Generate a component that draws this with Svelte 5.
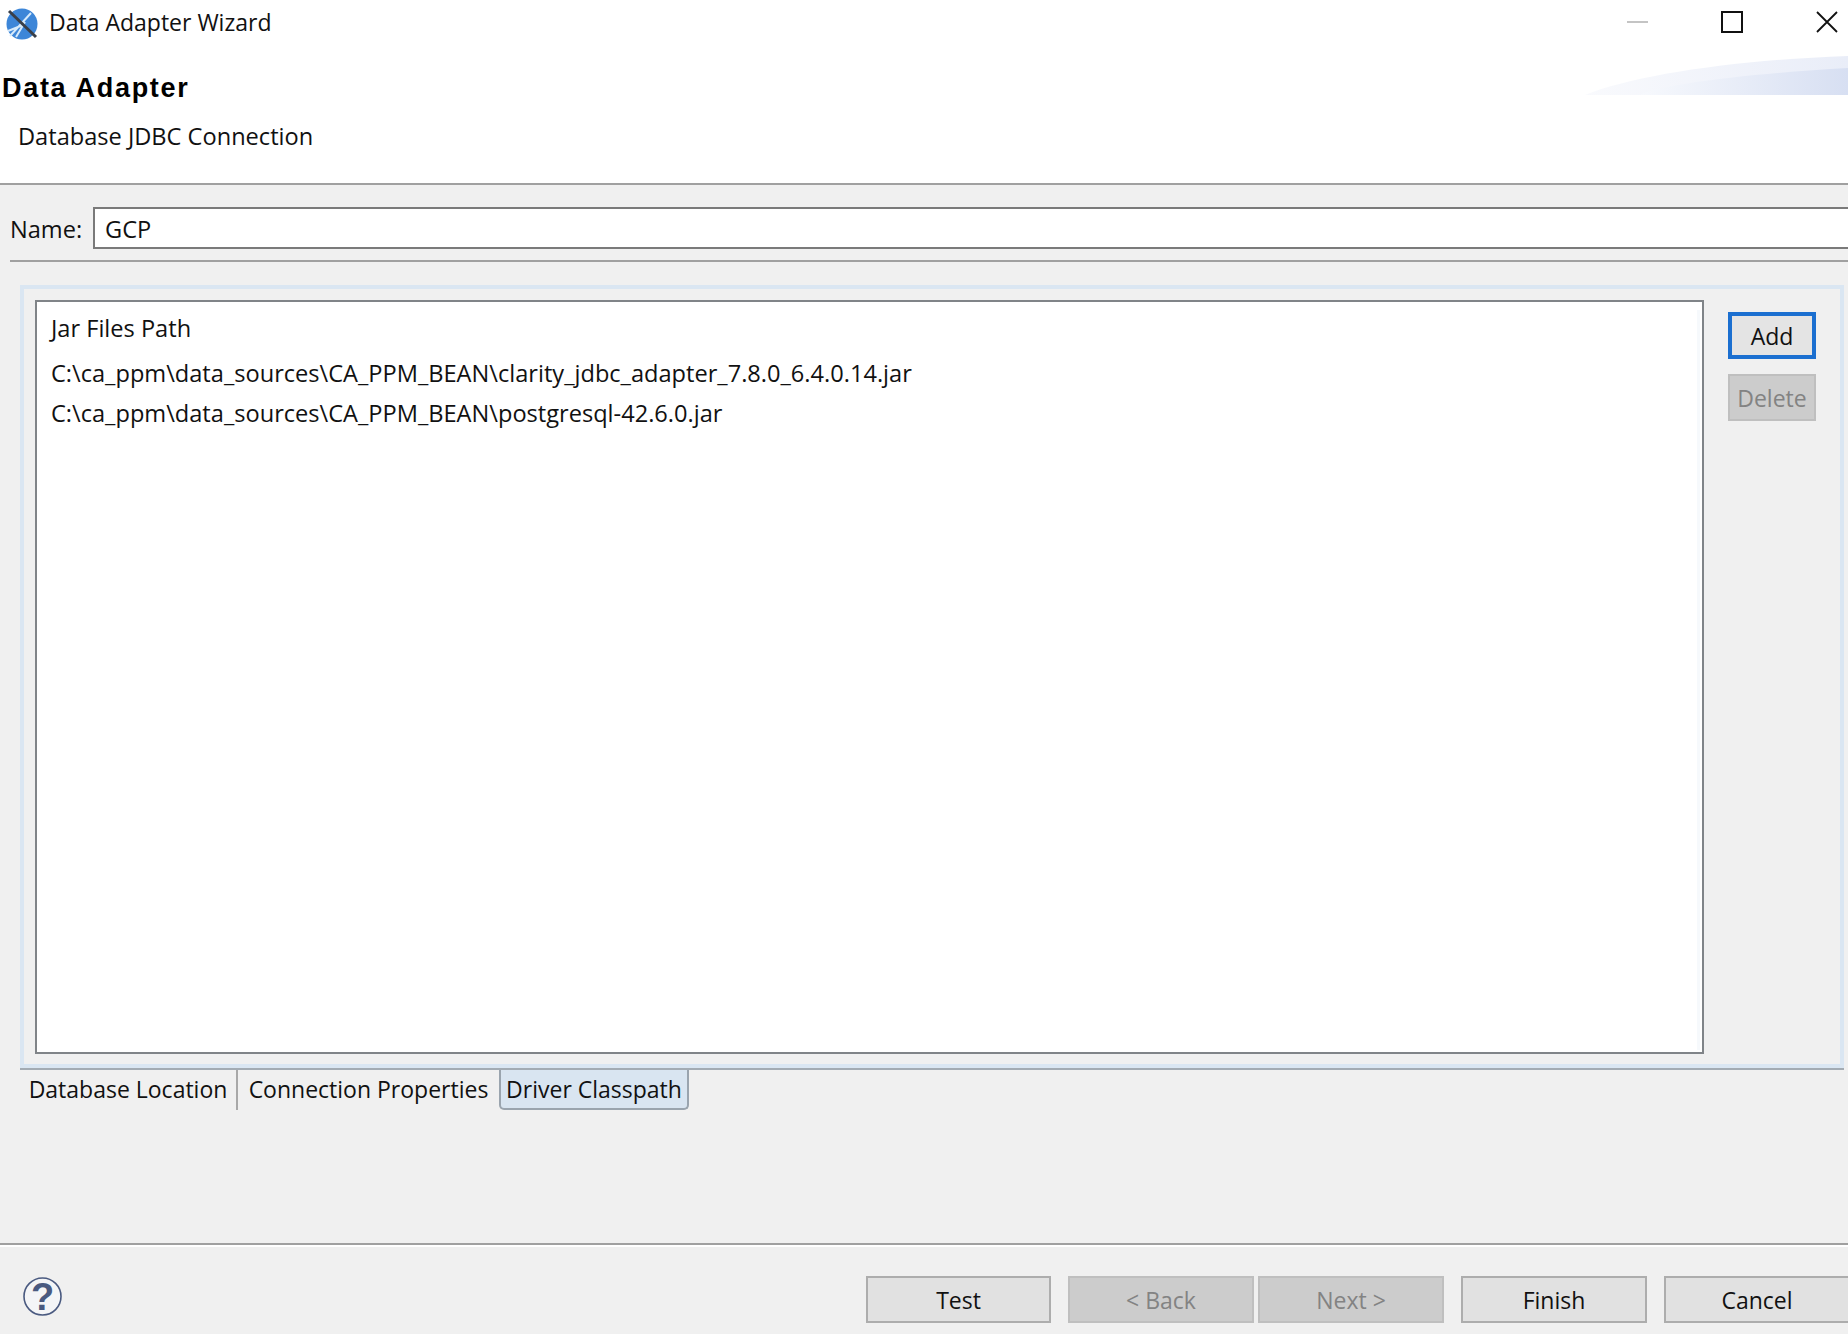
<script>
	const jars = [
		'C:\\ca_ppm\\data_sources\\CA_PPM_BEAN\\clarity_jdbc_adapter_7.8.0_6.4.0.14.jar',
		'C:\\ca_ppm\\data_sources\\CA_PPM_BEAN\\postgresql-42.6.0.jar'
	];
	const tabs = ['Database Location', 'Connection Properties', 'Driver Classpath'];
	let activeTab = $state(2);
</script>

<div class="window">
	<header class="head">
		<div class="titlebar">
			<svg class="appicon" width="34" height="36" viewBox="0 0 34 36">
				<circle cx="18" cy="20" r="15.5" fill="#3d86d8" />
				<path d="M6 32 L27 9 M4 27 L19 21 M12 33 L21 18" stroke="#d6eafb" stroke-width="2" fill="none" />
				<path d="M5 7 L32 33" stroke="#3a3f48" stroke-width="3" />
			</svg>
			<span class="title">Data Adapter Wizard</span>
			<div class="controls">
				<span class="min"></span>
				<span class="max"></span>
				<svg class="close" width="22" height="22" viewBox="0 0 22 22">
					<path d="M1 1 L21 21 M21 1 L1 21" stroke="#111" stroke-width="1.8" />
				</svg>
			</div>
		</div>
		<h1>Data Adapter</h1>
		<p class="sub">Database JDBC Connection</p>
		<svg class="banner" width="263" height="42" viewBox="0 0 263 42">
			<defs>
				<linearGradient id="bn" x1="0" x2="1" y1="0" y2="0">
					<stop offset="0" stop-color="#f7f9fd" />
					<stop offset="1" stop-color="#d7dff2" />
				</linearGradient>
				<linearGradient id="bt" x1="0" x2="1" y1="0" y2="0">
					<stop offset="0" stop-color="#f9fafd" />
					<stop offset="1" stop-color="#e9edf8" />
				</linearGradient>
			</defs>
			<path d="M0 40 C50 20 150 5 263 1 V40 Z" fill="url(#bt)" />
			<path d="M55 40 C70 30 170 18 263 13 V40 Z" fill="url(#bn)" />
		</svg>
	</header>

	<main class="body">
		<div class="name-row">
			<label for="adapter-name">Name:</label>
			<input id="adapter-name" value="GCP" />
		</div>
		<div class="rule"></div>

		<section class="folder">
			<div class="list">
				<div class="list-head">Jar Files Path</div>
				{#each jars as jar}
					<div class="jar">{jar}</div>
				{/each}
				<div class="scroll-hint"></div>
			</div>
			<div class="side">
				<button class="btn focus">Add</button>
				<button class="btn off" disabled>Delete</button>
			</div>
		</section>

		<nav class="tabs">
			{#each tabs as tab, i}
				<button class="tab t{i}" class:on={activeTab === i} onclick={() => (activeTab = i)}>{tab}</button>
			{/each}
		</nav>
	</main>

	<footer class="foot">
		<svg class="help" width="41" height="41" viewBox="0 0 41 41">
			<circle cx="20.5" cy="20.5" r="18.5" fill="#f4f5f7" stroke="#4a5a80" stroke-width="1.6" />
			<text x="20.5" y="34" text-anchor="middle" class="q">?</text>
		</svg>
		<div class="actions">
			<button class="btn wide first">Test</button>
			<button class="btn wide off tight" disabled>&lt; Back</button>
			<button class="btn wide off" disabled>Next &gt;</button>
			<button class="btn wide">Finish</button>
			<button class="btn wide">Cancel</button>
		</div>
	</footer>
</div>

<style>
	:global(body) {
		margin: 0;
		background: #f0f0f0;
	}
	.window {
		width: 1848px;
		height: 1334px;
		overflow: hidden;
		display: flex;
		flex-direction: column;
		background: #f0f0f0;
		color: #111;
		font-family: "Open Sans", "Noto Sans", sans-serif;
		font-size: 23.6px;
	}
	.head {
		position: relative;
		height: 183px;
		flex: none;
		background: #fff;
		border-bottom: 2px solid #a0a0a0;
	}
	.titlebar {
		height: 44px;
		display: flex;
		align-items: center;
		padding-left: 4px;
	}
	.appicon {
		margin-right: 11px;
		flex: none;
	}
	.title {
		font-size: 23px;
	}
	.controls {
		margin-left: auto;
		display: flex;
		align-items: center;
		padding-right: 10px;
		height: 41px;
	}
	.min {
		width: 21px;
		height: 2px;
		background: #c4c4c4;
		margin-right: 73px;
	}
	.max {
		width: 18px;
		height: 18px;
		border: 2px solid #111;
		margin-right: 73px;
	}
	.close {
		flex: none;
	}
	h1 {
		margin: 28px 0 0 2px;
		font: bold 27px/32px "Liberation Sans", Arial, sans-serif;
		letter-spacing: 1.7px;
		color: #000;
	}
	.sub {
		margin: 16px 0 0 18px;
		line-height: 32px;
	}
	.banner {
		position: absolute;
		right: 0;
		top: 55px;
	}
	.body {
		flex: none;
		height: 1058px;
		display: flex;
		flex-direction: column;
	}
	.name-row {
		display: flex;
		align-items: center;
		height: 42px;
		margin-top: 22px;
		padding-left: 10px;
	}
	.name-row label {
		width: 83px;
		flex: none;
		padding-top: 1px;
	}
	.name-row input {
		flex: none;
		width: 1800px;
		height: 42px;
		box-sizing: border-box;
		border: 2px solid #7a7a7a;
		border-radius: 0;
		padding: 1px 10px 0;
		background: #fff;
		color: #111;
		font: inherit;
		outline: none;
	}
	.rule {
		height: 2px;
		margin: 11px 0 0 10px;
		background: #a0a0a0;
	}
	.folder {
		margin: 23px 4px 0 20px;
		height: 783px;
		box-sizing: border-box;
		border: 4px solid #dae6f2;
		padding: 11px 11px 10px;
		display: flex;
	}
	.list {
		position: relative;
		width: 1669px;
		box-sizing: border-box;
		border: 2px solid #808488;
		background: #fff;
		padding: 10px 14px;
	}
	.list-head {
		height: 32px;
		line-height: 32px;
		margin-bottom: 9px;
	}
	.jar {
		height: 40px;
		line-height: 40px;
	}
	.scroll-hint {
		position: absolute;
		top: 8px;
		right: 2px;
		bottom: 2px;
		width: 3px;
		background: #f6f9fc;
	}
	.side {
		margin-left: 24px;
		padding-top: 12px;
		display: flex;
		flex-direction: column;
		gap: 15px;
		width: 88px;
	}
	.btn {
		box-sizing: border-box;
		height: 47px;
		border: 2px solid #adadad;
		background: #e1e1e1;
		color: #111;
		font: inherit;
		font-size: 23px;
		padding: 0;
	}
	.focus {
		border: 4px solid #1b6fd0;
		background: #e4e4e4;
	}
	.off {
		background: #cccccc;
		border-color: #bfbfbf;
		color: #838383;
	}
	.tabs {
		display: flex;
		margin-left: 20px;
		height: 40px;
		border-top: 2px solid #a3abb3;
		margin-right: 4px;
	}
	.tab {
		box-sizing: border-box;
		height: 40px;
		border: 0;
		background: none;
		color: #111;
		font: inherit;
		font-size: 23px;
		padding: 0 0 2px;
	}
	.t0 {
		width: 218px;
		border-right: 2px solid #a8a8a8;
	}
	.t1 {
		width: 261px;
	}
	.t2 {
		width: 190px;
	}
	.on {
		background: #d9e5f1;
		border: 2px solid #9aa4ae;
		border-top: 0;
		border-radius: 0 0 5px 5px;
		padding: 0;
	}
	.foot {
		flex: 1;
		border-top: 2px solid #a0a0a0;
		box-shadow: inset 0 2px 0 #fff;
		display: flex;
		align-items: flex-start;
		padding: 31px 0 0 22px;
	}
	.help {
		flex: none;
	}
	.q {
		font: bold 38px "Liberation Sans", Arial, sans-serif;
		fill: #4a5a80;
	}
	.actions {
		margin-left: 803px;
		display: flex;
		gap: 17px;
		flex: none;
	}
	.wide {
		width: 186px;
	}
	.first {
		width: 185px;
	}
	.tight {
		margin-right: -13px;
	}
</style>
